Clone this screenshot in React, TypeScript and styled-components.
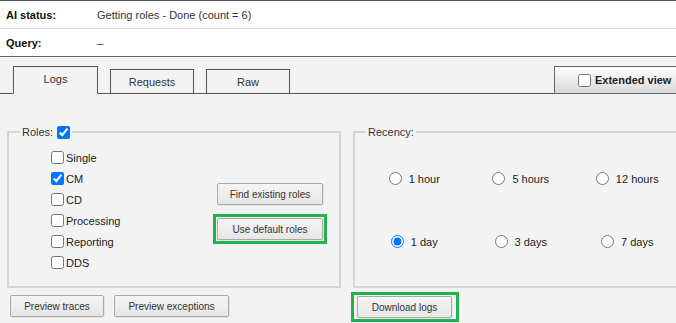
import React from 'react';
import styled, {createGlobalStyle} from 'styled-components';

const GlobalStyle = createGlobalStyle`
	html, body {
		margin: 0;
		overflow: hidden;
		background: #f3f3f3;
	}

	body {
		font-family: "Liberation Sans", Arial, sans-serif;
		font-size: 11px;
		color: #222;
	}
`;

const Page = styled.div`
	width: 700px;
`;

const InfoTable = styled.div`
	background: #fff;
	border-top: 1px solid #555;
	border-bottom: 1px solid #666;
`;

type InfoRowProps = {
	$last?: boolean;
};

const InfoRow = styled.div<InfoRowProps>`
	display: grid;
	grid-template-columns: 91px 1fr;
	align-items: center;
	height: 27px;
	padding-left: 6px;
	border-bottom: ${(props) => (props.$last ? 'none' : '1px solid #d6d6d6')};
`;

const InfoLabel = styled.span`
	font-weight: bold;
	color: #111;
`;

const InfoValue = styled.span`
	color: #333;
`;

const TabBar = styled.div`
	display: flex;
	align-items: flex-end;
	gap: 12px;
	padding: 9px 0 0 13px;
	border-bottom: 1px solid #555;
`;

type TabProps = {
	$active?: boolean;
	$width: number;
};

const Tab = styled.div<TabProps>`
	box-sizing: border-box;
	width: ${(props) => props.$width}px;
	height: ${(props) => (props.$active ? 28 : 25)}px;
	margin-bottom: -1px;
	display: flex;
	align-items: center;
	justify-content: center;
	background: #f3f3f3;
	border: 1px solid #555;
	border-bottom-color: ${(props) => (props.$active ? '#f3f3f3' : '#555')};
	color: #333;
	padding-bottom: ${(props) => (props.$active ? 2 : 0)}px;
`;

const ExtendedToggle = styled.label`
	box-sizing: border-box;
	width: 146px;
	height: 28px;
	margin-left: auto;
	margin-bottom: -1px;
	display: flex;
	align-items: center;
	gap: 4px;
	padding-left: 23px;
	background: linear-gradient(#ffffff, #e4e4e4 70%, #d8d8d8);
	border: 1px solid #666;
	font-weight: bold;
	color: #222;

	input {
		margin: 0;
	}
`;

const Panel = styled.div`
	display: grid;
	grid-template-columns: 334px 342px;
	column-gap: 12px;
	padding: 30px 0 0 7px;
`;

const Group = styled.fieldset`
	box-sizing: border-box;
	height: 164px;
	margin: 0;
	min-width: 0;
	padding: 7px 0 0 0;
	border: 2px solid #d5d5d5;
`;

const Legend = styled.legend`
	margin-left: 11px;
	padding: 0 2px;
	line-height: 16px;
	color: #333;
	display: flex;
	align-items: center;
	gap: 4px;

	input {
		margin: 0;
	}
`;

const RolesBody = styled.div`
	display: grid;
	grid-template-columns: 162px auto;
	padding-left: 42px;
`;

const CheckList = styled.div`
	display: flex;
	flex-direction: column;
`;

const CheckRow = styled.label`
	height: 21px;
	display: flex;
	align-items: center;
	gap: 2px;
	color: #222;

	input {
		margin: 0;
	}
`;

const ButtonColumn = styled.div`
	display: flex;
	flex-direction: column;
	align-items: flex-start;
	gap: 9px;
	padding-top: 36px;
`;

type ButtonProps = {
	$width: number;
	$indent?: number;
};

const Button = styled.button<ButtonProps>`
	box-sizing: border-box;
	width: ${(props) => props.$width}px;
	height: 22px;
	margin: 0 0 0 ${(props) => props.$indent ?? 0}px;
	padding: 0;
	font-family: "Liberation Sans", Arial, sans-serif;
	font-size: 10px;
	color: #333;
	background: linear-gradient(#f5f5f5, #e6e6e6);
	border: 1px solid #a9a9a9;
	border-radius: 2px;
	box-shadow: 1px 1px 0 rgba(0, 0, 0, 0.06);
`;

type HighlightProps = {
	$pad: string;
	$shift?: number;
	$top?: number;
};

const Highlight = styled.div<HighlightProps>`
	display: inline-flex;
	align-self: flex-start;
	border: 3px solid #22b14c;
	padding: ${(props) => props.$pad};
	margin-left: ${(props) => props.$shift ?? 0}px;
	margin-top: ${(props) => props.$top ?? 0}px;
`;

const RecencyGrid = styled.div`
	display: grid;
	grid-template-columns: repeat(3, 106.5px);
	grid-template-rows: 63px 63px;
	padding-left: 6px;
`;

const RadioCell = styled.label`
	display: flex;
	align-items: center;
	justify-content: center;
	gap: 7px;
	color: #222;

	input {
		margin: 0;
	}
`;

const ActionRow = styled.div`
	display: flex;
	align-items: flex-start;
	gap: 10px;
	padding: 7px 0 0 3px;
`;

const ActionCell = styled.div`
	display: flex;
`;

const roles = [
	{name: 'Single', checked: false},
	{name: 'CM', checked: true},
	{name: 'CD', checked: false},
	{name: 'Processing', checked: false},
	{name: 'Reporting', checked: false},
	{name: 'DDS', checked: false}
];

const ranges = [
	{label: '1 hour', checked: false},
	{label: '5 hours', checked: false},
	{label: '12 hours', checked: false},
	{label: '1 day', checked: true},
	{label: '3 days', checked: false},
	{label: '7 days', checked: false}
];

const App = () => {
	return (
		<>
			<GlobalStyle />
			<Page>
				<InfoTable>
					<InfoRow>
						<InfoLabel>AI status:</InfoLabel>
						<InfoValue>Getting roles - Done (count = 6)</InfoValue>
					</InfoRow>
					<InfoRow $last>
						<InfoLabel>Query:</InfoLabel>
						<InfoValue>–</InfoValue>
					</InfoRow>
				</InfoTable>

				<TabBar>
					<Tab $active $width={85}>Logs</Tab>
					<Tab $width={84}>Requests</Tab>
					<Tab $width={84}>Raw</Tab>
					<ExtendedToggle>
						<input type="checkbox" />
						Extended view
					</ExtendedToggle>
				</TabBar>

				<Panel>
					<Group>
						<Legend>
							Roles:
							<input type="checkbox" defaultChecked />
						</Legend>
						<RolesBody>
							<CheckList>
								{roles.map((role) => (
									<CheckRow key={role.name}>
										<input type="checkbox" defaultChecked={role.checked} />
										{role.name}
									</CheckRow>
								))}
							</CheckList>
							<ButtonColumn>
								<Button $width={106} $indent={4}>Find existing roles</Button>
								<Highlight $pad="1px">
									<Button $width={106}>Use default roles</Button>
								</Highlight>
							</ButtonColumn>
						</RolesBody>
					</Group>

					<Group>
						<Legend>Recency:</Legend>
						<RecencyGrid>
							{ranges.map((range) => (
								<RadioCell key={range.label}>
									<input type="radio" name="recency" defaultChecked={range.checked} />
									{range.label}
								</RadioCell>
							))}
						</RecencyGrid>
					</Group>

					<ActionRow>
						<Button $width={94}>Preview traces</Button>
						<Button $width={115}>Preview exceptions</Button>
					</ActionRow>

					<ActionCell>
						<Highlight $pad="1px 4px 1px 3px" $shift={-2} $top={4}>
							<Button $width={95}>Download logs</Button>
						</Highlight>
					</ActionCell>
				</Panel>
			</Page>
		</>
	);
};

export default App;
